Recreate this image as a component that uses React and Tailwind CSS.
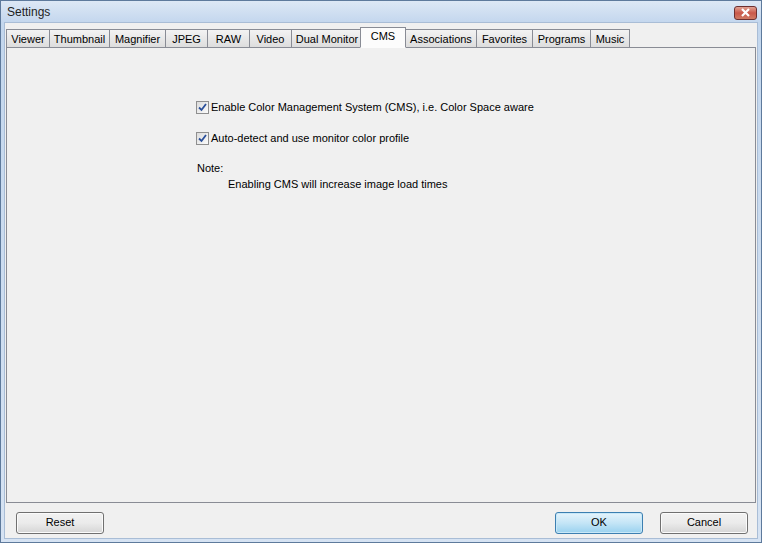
import React, { useState } from 'react';

const tabs = [
  { label: 'Viewer', w: 44 },
  { label: 'Thumbnail', w: 61 },
  { label: 'Magnifier', w: 57 },
  { label: 'JPEG', w: 43 },
  { label: 'RAW', w: 43 },
  { label: 'Video', w: 43 },
  { label: 'Dual Monitor', w: 72 },
  { label: 'CMS', w: 46 },
  { label: 'Associations', w: 72 },
  { label: 'Favorites', w: 57 },
  { label: 'Programs', w: 59 },
  { label: 'Music', w: 40 },
];

const Check = ({ checked, onChange, children }) => (
  <label className="flex items-center gap-[2px] cursor-default leading-[13px]">
    <span
      onClick={onChange}
      className="w-[13px] h-[13px] border border-[#8f8f8f] bg-gradient-to-br from-[#dcdcdc] to-[#fbfbfb] flex items-center justify-center"
    >
      {checked && (
        <svg width="9" height="9" viewBox="0 0 9 9">
          <path d="M1 4.5 L3.5 7 L8 1" fill="none" stroke="#2a4f9a" strokeWidth="1.8" />
        </svg>
      )}
    </span>
    <span>{children}</span>
  </label>
);

const Button = ({ children, primary }) => (
  <button
    className={`w-[88px] h-[22px] rounded-[3px] border text-[#000] ${
      primary
        ? 'border-[#3c7fb1] bg-gradient-to-b from-[#e5f4fc] via-[#c4e5f6] to-[#98d1ef] shadow-[inset_0_0_0_1px_#c8e8f8]'
        : 'border-[#707070] bg-gradient-to-b from-[#f2f2f2] via-[#ebebeb] to-[#d5d5d5] shadow-[inset_0_0_0_1px_#fbfbfb]'
    }`}
  >
    {children}
  </button>
);

export default function App() {
  const [active, setActive] = useState('CMS');
  const [cms, setCms] = useState(true);
  const [auto, setAuto] = useState(true);

  return (
    <div
      className="w-[762px] h-[543px] flex flex-col border border-[#5e7a9c] bg-gradient-to-b from-[#c2d6ed] to-[#d6e3f3] text-[11px] text-black"
      style={{ fontFamily: '"Liberation Sans", Arial, sans-serif' }}
    >
      {/* title bar */}
      <div className="h-[21px] flex items-center justify-between pl-[6px] pr-[4px] bg-gradient-to-b from-[#dde8f5] to-[#c4d7ee]">
        <span className="text-[12px] text-[#1e1e1e]">Settings</span>
        <div className="w-[23px] h-[14px] mt-[2px] rounded-[3px] border border-[#6d3030] bg-gradient-to-b from-[#e0a294] via-[#c9584a] to-[#cf7a64] flex items-center justify-center">
          <svg width="11" height="9" viewBox="0 0 11 9">
            <path d="M2 1 L9 8 M9 1 L2 8" stroke="#fff" strokeWidth="2.2" />
          </svg>
        </div>
      </div>

      {/* client */}
      <div className="flex-1 mx-[3px] mb-[3px] bg-[#f0f0f0] border border-[#a9bdd6] flex flex-col">
        <div className="flex items-end pl-[1px] h-[25px]">
          {tabs.map((t) => {
            const sel = t.label === active;
            return (
              <div
                key={t.label}
                onClick={() => setActive(t.label)}
                style={{ width: t.w }}
                className={`flex items-center justify-center whitespace-nowrap border border-[#898c95] ${
                  sel
                    ? 'h-[21px] bg-[#fcfcfc] border-b-[#fcfcfc] -ml-[2px] -mr-[1px] z-10 relative pb-[3px]'
                    : 'h-[19px] bg-gradient-to-b from-[#f3f3f3] to-[#dcdcdc] border-b-0 -mr-[1px]'
                }`}
              >
                {t.label}
              </div>
            );
          })}
        </div>
        <div className="flex-1 border border-[#898c95] bg-[#f0f0f0] mx-[1px] -mt-[1px]">
          <div className="pl-[189px] pt-[53px] flex flex-col leading-[13px]">
            <Check checked={cms} onChange={() => setCms(!cms)}>
              Enable Color Management System (CMS), i.e. Color Space aware
            </Check>
            <div className="h-[18px]" />
            <Check checked={auto} onChange={() => setAuto(!auto)}>
              Auto-detect and use monitor color profile
            </Check>
            <div className="mt-[17px] pl-[1px]">Note:</div>
            <div className="mt-[3px] pl-[32px]">Enabling CMS will increase image load times</div>
          </div>
        </div>
        <div className="h-[35px] flex items-center justify-between pl-[11px] pr-[9px] pt-[4px]">
          <Button>Reset</Button>
          <div className="flex gap-[17px]">
            <Button primary>OK</Button>
            <Button>Cancel</Button>
          </div>
        </div>
      </div>
    </div>
  );
}
